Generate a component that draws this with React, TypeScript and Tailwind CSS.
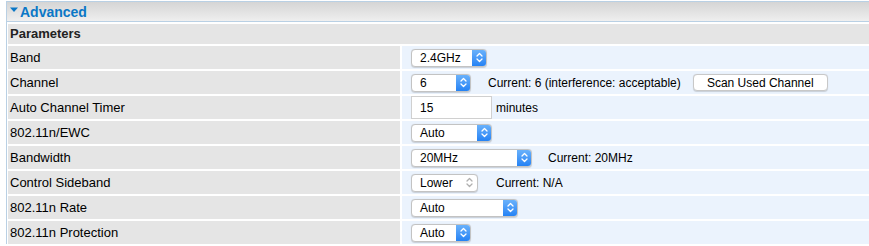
import React from "react";

const font = { fontFamily: '"Liberation Sans", Arial, Helvetica, sans-serif' };

function Chevrons({ color }: { color: string }) {
  return (
    <svg width="7" height="11" viewBox="0 0 7 11" fill="none">
      <path d="M1 4 L3.5 1.5 L6 4" stroke={color} strokeWidth="1.3" strokeLinecap="round" strokeLinejoin="round" />
      <path d="M1 7 L3.5 9.5 L6 7" stroke={color} strokeWidth="1.3" strokeLinecap="round" strokeLinejoin="round" />
    </svg>
  );
}

function Select({ value, width, disabled }: { value: string; width: string; disabled?: boolean }) {
  return (
    <div
      className={`${width} h-[18px] flex items-stretch rounded-[4px] border border-[#c3c3c3] bg-white shadow-[0_0.5px_1px_rgba(0,0,0,0.15)] overflow-hidden shrink-0`}
    >
      <div className="flex-1 flex items-center pl-[8px] text-[12px] text-black leading-none">{value}</div>
      {disabled ? (
        <div className="w-[15px] flex items-center justify-center">
          <Chevrons color="#b0b0b0" />
        </div>
      ) : (
        <div className="w-[15px] flex items-center justify-center bg-gradient-to-b from-[#6db4fb] to-[#1d7ff4] -my-px -mr-px rounded-r-[4px]">
          <Chevrons color="#ffffff" />
        </div>
      )}
    </div>
  );
}

function Row({ label, children }: { label: string; children: React.ReactNode }) {
  return (
    <div className="flex gap-[2px] h-[23px]">
      <div className="w-[392px] shrink-0 bg-[#e5e5e5] flex items-center pl-[2px] text-[13px] text-black">{label}</div>
      <div className="flex-1 bg-[#ebf3fd] flex items-center pl-[9px] text-[12px] text-black">{children}</div>
    </div>
  );
}

export default function App() {
  return (
    <div className="w-[869px] h-[246px] bg-white overflow-hidden" style={font}>
      <div className="mt-[1px] ml-[6px] border-l border-t border-[#b9d0e4]">
        <div className="h-[20px] border-b border-[#b9d0e4] bg-gradient-to-b from-[#d5d5d5] to-[#efefef] flex items-center pl-[3px]">
          <svg width="8" height="6" viewBox="0 0 8 6" className="mr-[2px] -mt-[3px]">
            <path d="M0 0.5 L8 0.5 L4 5 Z" fill="#0a77c6" />
          </svg>
          <span className="text-[#0a77c6] font-bold text-[14px] leading-none">Advanced</span>
        </div>
        <div className="flex flex-col gap-[2px] pt-[2px] pl-[1px]">
          <div className="h-[20px] bg-[#e5e5e5] flex items-center pl-[2px] text-[13px] font-bold text-[#222]">Parameters</div>
          <Row label="Band">
            <Select value="2.4GHz" width="w-[76px]" />
          </Row>
          <Row label="Channel">
            <Select value="6" width="w-[60px]" />
            <span className="ml-[17px]">Current: 6 (interference: acceptable)</span>
            <div className="ml-[12px] w-[135px] h-[17px] rounded-[4px] border border-[#c8c8c8] bg-white shadow-[0_0.5px_1px_rgba(0,0,0,0.15)] flex items-center justify-center text-[12px]">
              Scan Used Channel
            </div>
          </Row>
          <Row label="Auto Channel Timer">
            <div className="w-[81px] h-[23px] border border-[#d0d0d0] bg-white flex items-center pl-[8px] text-[12px]">15</div>
            <span className="ml-[4px]">minutes</span>
          </Row>
          <Row label="802.11n/EWC">
            <Select value="Auto" width="w-[81px]" />
          </Row>
          <Row label="Bandwidth">
            <Select value="20MHz" width="w-[121px]" />
            <span className="ml-[16px]">Current: 20MHz</span>
          </Row>
          <Row label="Control Sideband">
            <Select value="Lower" width="w-[67px]" disabled />
            <span className="ml-[18px]">Current: N/A</span>
          </Row>
          <Row label="802.11n Rate">
            <Select value="Auto" width="w-[107px]" />
          </Row>
          <Row label="802.11n Protection">
            <Select value="Auto" width="w-[60px]" />
          </Row>
        </div>
      </div>
    </div>
  );
}
